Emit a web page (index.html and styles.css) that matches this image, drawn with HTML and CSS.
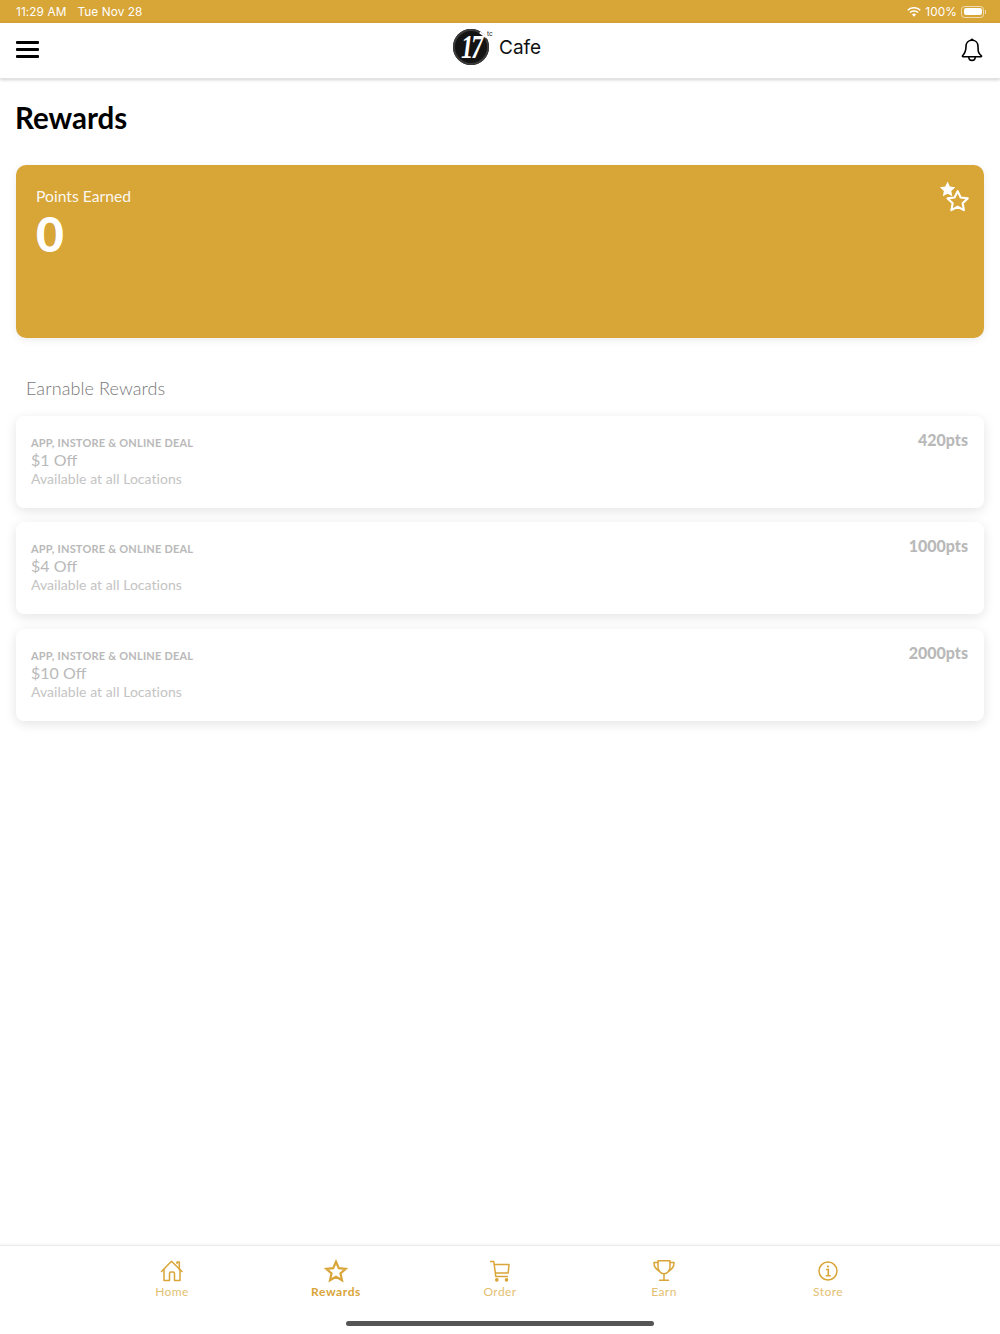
FILE: index.html
```html
<!DOCTYPE html>
<html lang="en">
<head>
    <meta charset="UTF-8">
    <meta name="viewport" content="width=device-width, initial-scale=1.0">
    <title>Rewards</title>
    <link rel="stylesheet" href="styles.css">
</head>
<body>

<div class="app">
    <div class="status-bar">
        <div class="status-time"><span>11:29 AM</span><span>Tue Nov 28</span></div>
        <div class="status-right">
            <svg class="wifi" width="14" height="10" viewBox="0 0 14 10">
                <path d="M.7 3.3a9 9 0 0 1 12.6 0" fill="none" stroke="#fff" stroke-width="1.5"/>
                <path d="M2.9 5.5a6 6 0 0 1 8.2 0" fill="none" stroke="#fff" stroke-width="1.5"/>
                <path d="M7 9.8 4.9 7.5a3 3 0 0 1 4.2 0z" fill="#fff"/>
            </svg>
            <span>100%</span>
            <div class="battery"><div class="battery-fill"></div></div>
            <div class="battery-cap"></div>
        </div>
    </div>

    <header class="top-bar">
        <div class="menu-icon"><i></i><i></i><i></i></div>
        <div class="logo">
            <div class="logo-badge">
                <span class="logo-num">17</span>
                <span class="logo-mark">tc</span>
            </div>
            <span class="logo-name">Cafe</span>
        </div>
        <svg class="bell" width="22" height="24" viewBox="0 0 22 24">
            <path d="M11 2.200c-3.700 0-6 2.800-6 6.300 0 4.800-1.200 7-3.400 9.300-.4.500-.1 1 .5 1h17.800c.6 0 .9-.5.500-1C17.200 15.500 17 13.300 17 8.500c0-3.500-2.300-6.300-6-6.300z" fill="none" stroke="#000" stroke-width="1.600" stroke-linejoin="round"/>
            <path d="M7.800 19c0 2.100 1.400 3.400 3.200 3.400s3.200-1.300 3.200-3.400" fill="none" stroke="#000" stroke-width="1.600"/>
            <path d="M10 2.200c0-1.400 2-1.400 2 0" fill="none" stroke="#000" stroke-width="1.400"/>
        </svg>
    </header>

    <main class="content">
        <h1 class="page-title">Rewards</h1>

        <section class="points-card">
            <div>
                <div class="points-label">Points Earned</div>
                <div class="points-value">0</div>
            </div>
            <svg class="points-stars" width="34" height="36" viewBox="0 0 32 34">
                <path d="M9 1.500l2.200 4.700 5.100.6-3.800 3.500 1 5.100L9 12.900l-4.500 2.500 1-5.100L1.700 6.800l5.100-.6z" fill="#fff"/>
                <path d="M18.500 10.500l2.900 6 6.600.9-4.800 4.600 1.200 6.500-5.900-3.200-5.900 3.200 1.200-6.500L9 17.400l6.600-.9z" fill="none" stroke="#fff" stroke-width="2" stroke-linejoin="round"/>
            </svg>
        </section>

        <h2 class="section-title">Earnable Rewards</h2>

        <div class="reward-list">
            <div class="reward-card">
                <div>
                    <div class="reward-type">APP, INSTORE &amp; ONLINE DEAL</div>
                    <div class="reward-name">$1 Off</div>
                    <div class="reward-where">Available at all Locations</div>
                </div>
                <div class="reward-pts">420pts</div>
            </div>
            <div class="reward-card">
                <div>
                    <div class="reward-type">APP, INSTORE &amp; ONLINE DEAL</div>
                    <div class="reward-name">$4 Off</div>
                    <div class="reward-where">Available at all Locations</div>
                </div>
                <div class="reward-pts">1000pts</div>
            </div>
            <div class="reward-card">
                <div>
                    <div class="reward-type">APP, INSTORE &amp; ONLINE DEAL</div>
                    <div class="reward-name">$10 Off</div>
                    <div class="reward-where">Available at all Locations</div>
                </div>
                <div class="reward-pts">2000pts</div>
            </div>
        </div>
    </main>

    <nav class="tab-bar">
        <div class="tab">
            <svg width="24" height="24" viewBox="0 0 24 24" fill="none" stroke="#d9a538" stroke-width="1.500" stroke-linejoin="round" stroke-linecap="round">
                <path d="M1.500 12.500 11.500 2.200l10.500 10.300"/>
                <path d="M17 4.500V3h2.300v7.500"/>
                <path d="M4 10.500V21.500h5.500v-7a1.500 1.500 0 0 1 1.500-1.500h2a1.500 1.500 0 0 1 1.500 1.500v7H20V10.500"/>
            </svg>
            <span>Home</span>
        </div>
        <div class="tab active">
            <svg width="24" height="24" viewBox="0 0 24 24" fill="none" stroke="#d9a538" stroke-width="2.200" stroke-linejoin="miter">
                <path d="M12 2.800l2.800 6.300 6.900.7-5.200 4.600 1.500 6.800-6-3.500-6 3.500 1.500-6.800-5.200-4.600 6.900-.7z"/>
            </svg>
            <span>Rewards</span>
        </div>
        <div class="tab">
            <svg width="24" height="24" viewBox="0 0 24 24" fill="none" stroke="#d9a538" stroke-width="1.500" stroke-linejoin="round">
                <path d="M2 2.500h3.800l2 15H20"/>
                <path d="M6.200 5.500H21l-.8 8.500H7.400"/>
                <circle cx="8.800" cy="20.800" r="1.100" fill="#d9a538"/>
                <circle cx="18.500" cy="20.800" r="1.100" fill="#d9a538"/>
            </svg>
            <span>Order</span>
        </div>
        <div class="tab">
            <svg width="24" height="24" viewBox="0 0 24 24" fill="none" stroke="#d9a538" stroke-width="1.500" stroke-linejoin="round" stroke-linecap="round">
                <path d="M6 1.800h12v6.500c0 3.500-2.500 6.500-6 6.500s-6-3-6-6.500z"/>
                <path d="M6 3.500H2c0 4 1.500 7 5.500 8.500M18 3.500h4c0 4-1.500 7-5.500 8.500"/>
                <path d="M12 15v6M7.500 21.200h9"/>
            </svg>
            <span>Earn</span>
        </div>
        <div class="tab">
            <svg width="24" height="24" viewBox="0 0 24 24" fill="none" stroke="#d9a538" stroke-width="1.500">
                <circle cx="12" cy="12" r="9"/>
                <path d="M10 10.500h2.300v6.300M9.800 16.800h5" stroke-width="1.600"/>
                <circle cx="12" cy="7.500" r="1.100" fill="#d9a538" stroke="none"/>
            </svg>
            <span>Store</span>
        </div>
        <div class="home-indicator"></div>
    </nav>
</div>

</body>
</html>
```

FILE: styles.css
```css
* {
    box-sizing: border-box;
}

body {
    margin: 0;
    padding: 0;
    background-color: #fff;
    font-family: "Lato", "Open Sans", sans-serif;
}

.app {
    position: relative;
    display: flex;
    flex-direction: column;
    width: 1000px;
    height: 1334px;
    overflow: hidden;
}

.status-bar {
    display: flex;
    justify-content: space-between;
    align-items: center;
    height: 23px;
    padding: 0 14px 0 16px;
    background-color: #d8a537;
    color: #fff;
    font-family: "Inter", sans-serif;
    font-size: 11.800px;
    letter-spacing: 0.100px;
}

.status-time {
    display: flex;
    gap: 11px;
}

.status-right {
    display: flex;
    align-items: center;
    gap: 4px;
}

.battery {
    width: 23px;
    height: 12px;
    padding: 1.500px;
    border: 1px solid rgba(255, 255, 255, 0.6);
    border-radius: 3.500px;
}

.battery-fill {
    height: 100%;
    background-color: #fff;
    border-radius: 2px;
}

.battery-cap {
    width: 1px;
    height: 4px;
    margin-left: -3px;
    background-color: rgba(255, 255, 255, 0.6);
}

.top-bar {
    position: relative;
    display: flex;
    justify-content: space-between;
    align-items: center;
    height: 56px;
    padding: 0 17px 2px 16px;
    background-color: #fff;
    border-bottom: 1px solid #e2e2e2;
    box-shadow: 0 1px 3px rgba(0, 0, 0, 0.18);
}

.menu-icon {
    display: flex;
    flex-direction: column;
    gap: 4px;
    width: 23px;
}

.menu-icon i {
    display: block;
    height: 3px;
    background-color: #000;
    border-radius: 1px;
}

.logo {
    position: absolute;
    left: 453px;
    top: 6px;
    display: flex;
    gap: 10px;
}

.logo-badge {
    position: relative;
    width: 36px;
    height: 36px;
    background-color: #141414;
    border-radius: 50%;
    box-shadow: inset 0 0 0 2px #3a3a3a;
}

/* white nick in the ring, top right */
.logo-badge::after {
    content: "";
    position: absolute;
    right: 1px;
    top: 5px;
    width: 9px;
    height: 2px;
    background-color: #fff;
    transform: rotate(35deg);
}

.logo-num {
    position: absolute;
    left: 8px;
    top: 1px;
    color: #fff;
    font-family: "Liberation Serif", serif;
    font-size: 34px;
    font-weight: bold;
    font-style: italic;
    line-height: 34px;
    letter-spacing: -3px;
    transform: scaleX(0.72);
    transform-origin: left center;
}

.logo-mark {
    position: absolute;
    left: 34px;
    top: 1px;
    color: #333;
    font-family: "Liberation Sans", sans-serif;
    font-size: 7px;
    line-height: 7px;
}

.logo-name {
    margin-top: 7px;
    color: #111;
    font-family: "Inter", sans-serif;
    font-size: 19px;
    line-height: 24px;
}

.content {
    flex: 1;
    padding: 0 16px;
}

.page-title {
    margin: 22px 0 30px -1px;
    color: #000;
    font-size: 29.500px;
    font-weight: 700;
    line-height: 34px;
}

.points-card {
    display: flex;
    justify-content: space-between;
    align-items: flex-start;
    height: 173px;
    padding: 21px 12px 0 20px;
    background-color: #d8a537;
    border-radius: 10px;
    box-shadow: 0 2px 8px rgba(0, 0, 0, 0.08);
    color: #fff;
}

.points-label {
    font-size: 15.700px;
    font-weight: 400;
    line-height: 20px;
    opacity: 0.92;
}

.points-value {
    font-size: 48px;
    font-weight: 900;
    line-height: 56px;
}

.points-stars {
    margin-top: -6px;
}

.section-title {
    margin: 39px 0 17px 10px;
    color: #777;
    font-size: 18px;
    font-weight: 300;
    line-height: 22px;
    letter-spacing: 0.1px;
}

.reward-list {
    display: flex;
    flex-direction: column;
    gap: 14.250px;
}

.reward-card {
    display: flex;
    justify-content: space-between;
    align-items: flex-start;
    height: 92px;
    padding: 15px 16px 0 15px;
    background-color: #fff;
    border-radius: 8px;
    box-shadow: 0 3px 12px rgba(0, 0, 0, 0.11);
}

.reward-type {
    margin-top: 4px;
    color: #b9b9b9;
    font-size: 11px;
    font-weight: 700;
    line-height: 15px;
    letter-spacing: 0.2px;
}

.reward-name {
    color: #b9b9b9;
    font-size: 16px;
    font-weight: 400;
    line-height: 20px;
}

.reward-where {
    color: #c4c4c4;
    font-size: 14px;
    font-weight: 400;
    line-height: 18px;
    letter-spacing: 0.05px;
}

.reward-pts {
    margin-top: 1px;
    color: #b9b9b9;
    font-size: 16px;
    font-weight: 900;
    line-height: 16px;
}

.tab-bar {
    display: flex;
    justify-content: center;
    height: 89px;
    padding: 13px 0 0;
    border-top: 1px solid #ececec;
    box-shadow: 0 -1px 3px rgba(0, 0, 0, 0.05);
    background-color: #fff;
}

.tab {
    display: flex;
    flex-direction: column;
    align-items: center;
    width: 164px;
    color: #e3c071;
    font-size: 12px;
    letter-spacing: 0.4px;
    line-height: 14px;
}

.tab.active {
    color: #d9a538;
    font-weight: 700;
    letter-spacing: 0.6px;
}

.tab svg {
    margin-bottom: 2px;
}

.home-indicator {
    position: absolute;
    left: 346px;
    bottom: 8px;
    width: 308px;
    height: 5px;
    background-color: #555;
    border-radius: 3px;
}
```
